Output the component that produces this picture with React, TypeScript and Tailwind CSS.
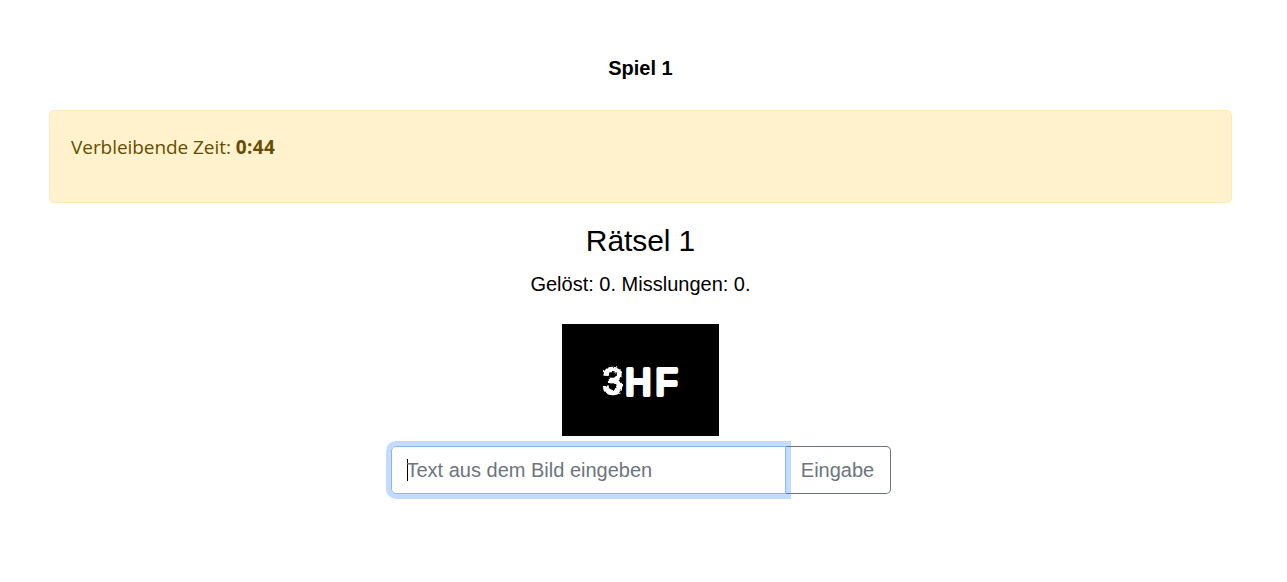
export default function App() {
  return (
    <main className="flex h-[582px] flex-col items-center overflow-hidden bg-white pr-[6px] pl-0 font-['Liberation_Sans',Arial,sans-serif] text-[20px] leading-[30px] text-black">
      <h1 className="mt-[53px] font-bold">Spiel 1</h1>
      <section className="mt-[27px] h-[93px] w-[1183px] rounded-[5px] border border-[#ffecb5] bg-[#fff2cd] pt-[21px] pl-[21px] font-['Open_Sans','Noto_Sans',sans-serif] text-[19px] tracking-[-0.06px] text-[#664d03]">
        Verbleibende Zeit: <strong className="tracking-[0.4px]">0:44</strong>
      </section>
      <h2 className="mt-[20px] text-[30px] leading-[36px] tracking-[-0.1px]">Rätsel 1</h2>
      <p className="mt-[10px]">Gelöst: 0. Misslungen: 0.</p>
      <svg className="mt-[25px] h-[112px] w-[157px] bg-black" viewBox="0 0 157 112">
        <defs>
          <filter id="rough" x="-20%" y="-20%" width="140%" height="140%">
            <feTurbulence type="fractalNoise" baseFrequency="0.3" numOctaves="1" seed="4" />
            <feDisplacementMap in="SourceGraphic" scale="3.5" xChannelSelector="R" yChannelSelector="G" />
          </filter>
        </defs>
        <g fill="white" stroke="white" strokeLinejoin="round" fontFamily="Liberation Sans" fontSize="36">
          <text x="40.8" y="70.3" strokeWidth="2.6" filter="url(#rough)">3</text>
          <text x="63.2" y="70.5" strokeWidth="4">H</text>
          <text x="93.4" y="70.5" strokeWidth="4">F</text>
        </g>
      </svg>
      <form className="mt-[10px] flex h-[48px] w-[500px]">
        <div className="z-10 flex w-[395px] items-center rounded-l-[5px] border border-[#86b7fe] pl-[15px] text-[#6c757d] shadow-[0_0_0_5px_#c2dbfe]">
          <span className="h-[22px] w-px bg-black" />
          <span className="-ml-px">Text aus dem Bild eingeben</span>
        </div>
        <button type="button" className="z-20 w-[105px] rounded-r-[5px] border border-l-0 border-[#6c757d] text-[#6c757d]">Eingabe</button>
      </form>
    </main>
  );
}
